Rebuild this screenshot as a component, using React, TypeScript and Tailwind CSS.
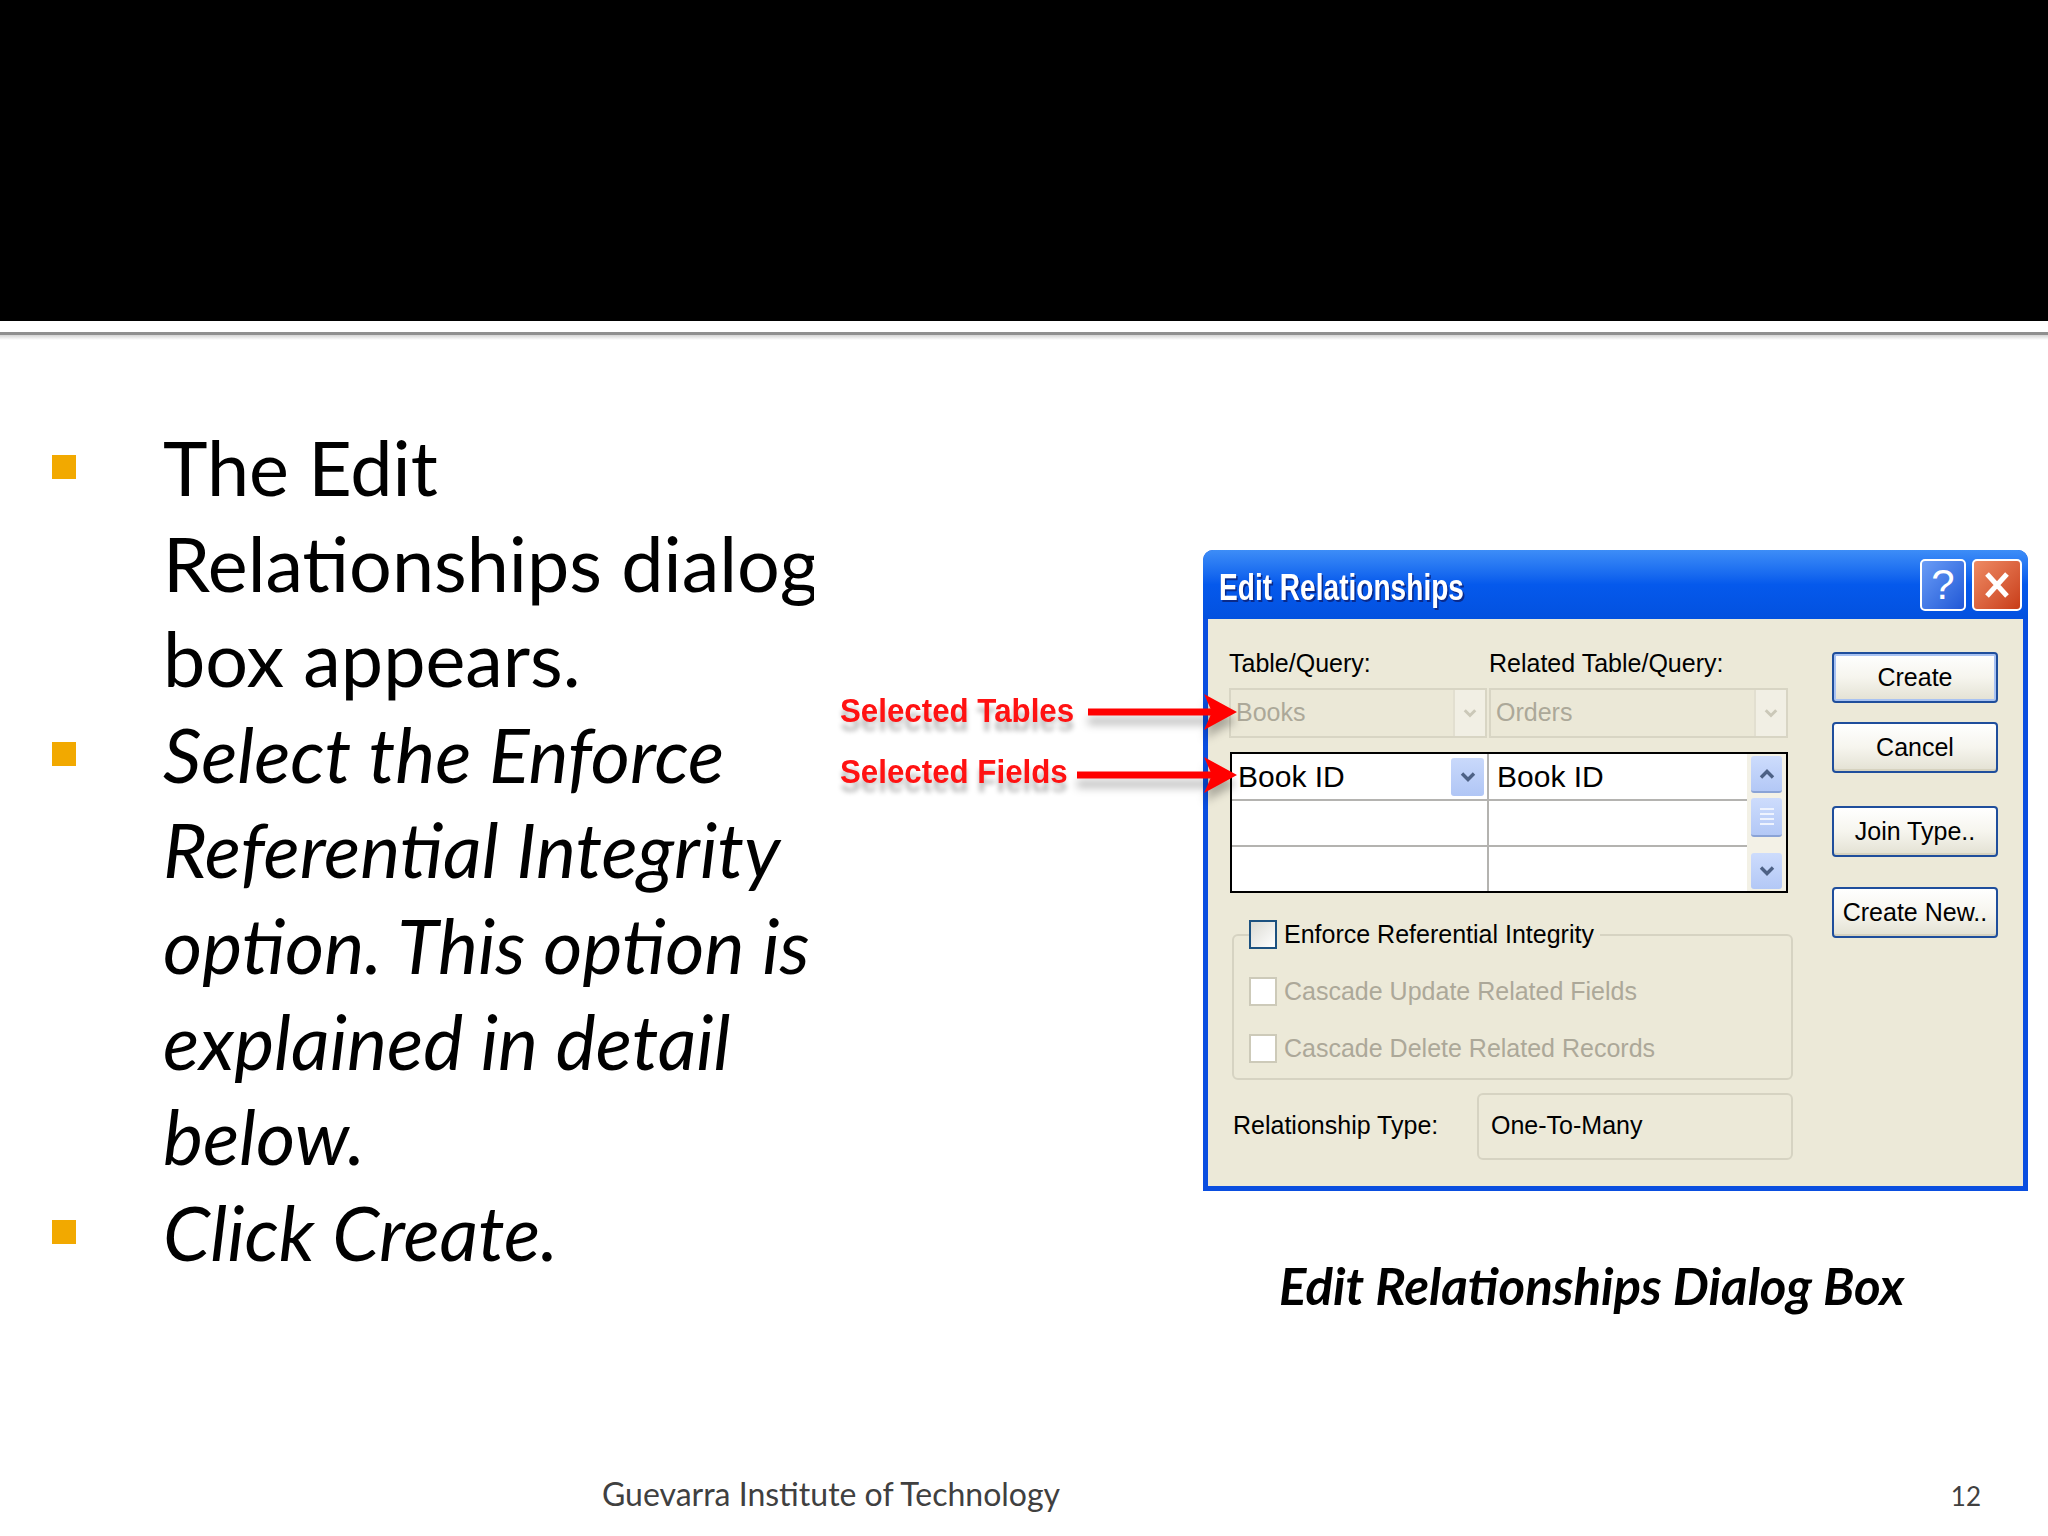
import React from "react";

const ui = "font-['Liberation_Sans',Arial,sans-serif]";
const slide = "font-['Lato','Open_Sans',sans-serif]";

function Chevron({ up = false, color, size = 16 }: { up?: boolean; color: string; size?: number }) {
  return (
    <svg width={size} height={size * 0.75} viewBox="0 0 16 12">
      <path d={up ? "M2 9.5l6-6 6 6" : "M2 2.5l6 6 6-6"} fill="none" stroke={color} strokeWidth={3.4} />
    </svg>
  );
}

function XpButton({ label, primary = false }: { label: string; primary?: boolean }) {
  return (
    <div
      className={`h-[51px] w-[166px] flex items-center justify-center rounded-[4px] border-2 border-[#1f4e9c] bg-gradient-to-b from-white via-[#f6f5ee] to-[#e3e1d3] text-[25px] text-black ${
        primary ? "shadow-[inset_0_0_0_2px_#a8c2f2]" : "shadow-[inset_0_-2px_0_#d6d2bf]"
      }`}
    >
      {label}
    </div>
  );
}

function CheckBox({ enabled }: { enabled: boolean }) {
  return (
    <div
      className={`w-[28px] h-[29px] shrink-0 ${
        enabled
          ? "border-2 border-[#1c5180] bg-gradient-to-br from-[#dcdbd4] to-white"
          : "border-2 border-[#cdcab9] bg-white"
      }`}
    />
  );
}

function DisabledCombo({ text, width }: { text: string; width: string }) {
  return (
    <div className={`${width} h-full flex items-center border-2 border-[#d8d5c4] bg-[#ebe8d7]`}>
      <span className="flex-1 pl-[5px] text-[25px] text-[#aca899]">{text}</span>
      <div className="w-[32px] h-full flex items-center justify-center bg-[#f1efe4] border-l-2 border-[#e2dfd0]">
        <Chevron color="#cbc8b8" size={14} />
      </div>
    </div>
  );
}

function Dialog() {
  return (
    <div className={`${ui} w-[825px] h-[641px] flex flex-col rounded-t-[10px] overflow-hidden bg-[#0a4ee0]`}>
      {/* title bar */}
      <div className="h-[69px] shrink-0 flex items-center bg-gradient-to-b from-[#3d8df7] via-[#0559ec] to-[#0351df] pl-[16px] pr-[6px]">
        <span className="inline-block mt-[7px] origin-left scale-x-[0.78] text-[36px] font-bold text-white [text-shadow:2px_2px_0_#0a2a8a] whitespace-nowrap">
          Edit Relationships
        </span>
        <div className="ml-auto flex gap-[6px]">
          <div className="w-[46px] h-[52px] rounded-[5px] border-2 border-white bg-gradient-to-br from-[#6a9cf6] to-[#2157d6] flex items-center justify-center text-[42px] leading-none text-white">
            ?
          </div>
          <div className="w-[50px] h-[52px] rounded-[5px] border-2 border-white bg-gradient-to-br from-[#ee8a63] to-[#c83c16] flex items-center justify-center">
            <svg width="28" height="30" viewBox="0 0 28 30">
              <path d="M4 4l20 22M24 4L4 26" stroke="white" strokeWidth={5} />
            </svg>
          </div>
        </div>
      </div>

      {/* body */}
      <div className="flex-1 mx-[5px] mb-[5px] bg-[#ece9d8] flex pl-[21px]">
        <div className="w-[564px] flex flex-col">
          <div className="mt-[31px] h-[28px] flex items-center text-[25px] text-black">
            <span className="w-[260px]">Table/Query:</span>
            <span>Related Table/Query:</span>
          </div>

          <div className="mt-[10px] h-[50px] flex gap-[2px]">
            <DisabledCombo text="Books" width="w-[258px]" />
            <DisabledCombo text="Orders" width="w-[299px]" />
          </div>

          <div className="mt-[14px] ml-[1px] h-[141px] w-[558px] border-2 border-black bg-white flex">
            <div className="w-[515px] flex flex-col">
              {[0, 1, 2].map((r) => (
                <div key={r} className={`flex-1 flex ${r < 2 ? "border-b-2 border-[#b4b3b0]" : ""}`}>
                  <div className="w-[257px] border-r-2 border-[#b4b3b0] flex items-center pl-[6px] pr-[3px]">
                    {r === 0 && (
                      <>
                        <span className="flex-1 text-[30px] text-black">Book ID</span>
                        <div className="w-[33px] h-[38px] rounded-[3px] bg-gradient-to-b from-[#c9d9fb] to-[#b0c6f5] flex items-center justify-center">
                          <Chevron color="#4d6185" />
                        </div>
                      </>
                    )}
                  </div>
                  <div className="flex-1 flex items-center pl-[8px]">
                    {r === 0 && <span className="text-[30px] text-black">Book ID</span>}
                  </div>
                </div>
              ))}
            </div>
            <div className="flex-1 bg-[#f3f1e6] flex flex-col items-center py-[2px] px-[4px]">
              <div className="w-[31px] h-[37px] rounded-[3px] bg-gradient-to-b from-[#cddcfc] to-[#b3c8f6] border-b-2 border-[#8aa3d6] flex items-center justify-center">
                <Chevron up color="#4d6185" />
              </div>
              <div className="mt-[5px] w-[31px] h-[39px] rounded-[3px] bg-gradient-to-b from-[#cddcfc] to-[#b3c8f6] border-b-2 border-[#8aa3d6] flex flex-col items-center justify-center gap-[3px]">
                <div className="w-[14px] h-[2px] bg-[#eef3fe]" />
                <div className="w-[14px] h-[2px] bg-[#eef3fe]" />
                <div className="w-[14px] h-[2px] bg-[#eef3fe]" />
                <div className="w-[14px] h-[2px] bg-[#eef3fe]" />
              </div>
              <div className="mt-auto w-[31px] h-[36px] rounded-[3px] bg-gradient-to-b from-[#cddcfc] to-[#b3c8f6] flex items-center justify-center">
                <Chevron color="#4d6185" />
              </div>
            </div>
          </div>

          <fieldset className="mt-[23px] ml-[3px] w-[561px] border-2 border-[#d6d3c2] rounded-[6px] px-0 pb-[10px]">
            <legend className="ml-[15px] pr-[6px] flex items-center gap-[7px] text-[25px] text-black">
              <CheckBox enabled />
              <span>Enforce Referential Integrity</span>
            </legend>
            <div className="mt-[19px] pl-[15px] flex items-center gap-[7px] text-[25px] text-[#aca899]">
              <CheckBox enabled={false} />
              <span>Cascade Update Related Fields</span>
            </div>
            <div className="mt-[20px] pl-[15px] flex items-center gap-[7px] text-[25px] text-[#aca899]">
              <CheckBox enabled={false} />
              <span>Cascade Delete Related Records</span>
            </div>
          </fieldset>

          <div className="mt-[13px] h-[67px] flex items-center text-[25px] text-black">
            <span className="pl-[4px]">Relationship Type:</span>
            <div className="ml-auto w-[316px] h-full border-2 border-[#d6d3c2] rounded-[6px] flex items-center pl-[12px]">
              One-To-Many
            </div>
          </div>
        </div>

        <div className="ml-[39px] pt-[33px] flex flex-col">
          <XpButton label="Create" primary />
          <div className="mt-[19px]">
            <XpButton label="Cancel" />
          </div>
          <div className="mt-[33px]">
            <XpButton label="Join Type.." />
          </div>
          <div className="mt-[30px]">
            <XpButton label="Create New.." />
          </div>
        </div>
      </div>
    </div>
  );
}

const bullets: { lines: string[]; italic: boolean }[] = [
  { lines: ["The Edit", "Relationships dialog", "box appears."], italic: false },
  {
    lines: ["Select the Enforce", "Referential Integrity", "option. This option is", "explained in detail", "below."],
    italic: true,
  },
  { lines: ["Click Create."], italic: true },
];

export default function App() {
  return (
    <div className="relative w-[2048px] h-[1536px] bg-white overflow-hidden flex flex-col">
      <div className="h-[321px] bg-black shrink-0" />
      <div className="h-[11px] shrink-0" />
      <div className="h-[3px] bg-[#8f8f8f] shrink-0" />
      <div className="h-[5px] bg-gradient-to-b from-[#d4d4d4] to-white shrink-0" />

      <div className="h-[1137px] flex">
        {/* bullet text */}
        <div className={`${slide} w-[814px] shrink-0 overflow-hidden pt-[79px]`}>
          {bullets.map((b, i) => (
            <div key={i} className="flex">
              <div className="ml-[52px] mt-[36px] w-[24px] h-[24px] bg-[#f2a900] shrink-0" />
              <div className={`ml-[87px] text-[75.5px] leading-[95.6px] text-black whitespace-nowrap ${b.italic ? "italic" : ""}`}>
                {b.lines.map((l) => (
                  <div key={l}>{l}</div>
                ))}
              </div>
            </div>
          ))}
        </div>

        {/* annotation labels */}
        <div className={`${ui} w-[389px] shrink-0 pl-[26px] pt-[350px] flex flex-col`}>
          {["Selected Tables", "Selected Fields"].map((t, i) => (
            <div key={t} className={`h-[40px] ${i === 1 ? "mt-[21px]" : ""}`}>
              <span className="inline-block origin-left scale-x-[0.92] whitespace-nowrap text-[34px] leading-[40px] font-bold text-[#ff1212] [text-shadow:0_9px_5px_rgba(0,0,0,0.28)]">
                {t}
              </span>
            </div>
          ))}
        </div>

        {/* dialog + caption */}
        <div className="pt-[210px] flex flex-col">
          <Dialog />
          <div className={`${slide} mt-[66px] pl-[76px] text-[51px] leading-[58px] font-bold italic text-black whitespace-nowrap`}>
            Edit Relationships Dialog Box
          </div>
        </div>
      </div>

      <div className={`${slide} h-[59px] flex items-baseline text-[#404040]`}>
        <span className="pl-[602px] text-[32px] leading-[34px]">Guevarra Institute of Technology</span>
        <span className="ml-auto mr-[67px] text-[26px] leading-[34px]">12</span>
      </div>

      {/* arrows overlaying the dialog */}
      <svg
        className="absolute left-[1060px] top-[680px] drop-shadow-[0_9px_4px_rgba(0,0,0,0.28)]"
        width="190"
        height="120"
        viewBox="0 0 190 120"
      >
        <rect x="28" y="28.5" width="124" height="7" fill="#ff0000" />
        <polygon points="144,14 177,32 144,50 152,32" fill="#ff0000" />
        <rect x="17" y="91.5" width="135" height="7" fill="#ff0000" />
        <polygon points="144,77 177,95 144,113 152,95" fill="#ff0000" />
      </svg>
    </div>
  );
}
